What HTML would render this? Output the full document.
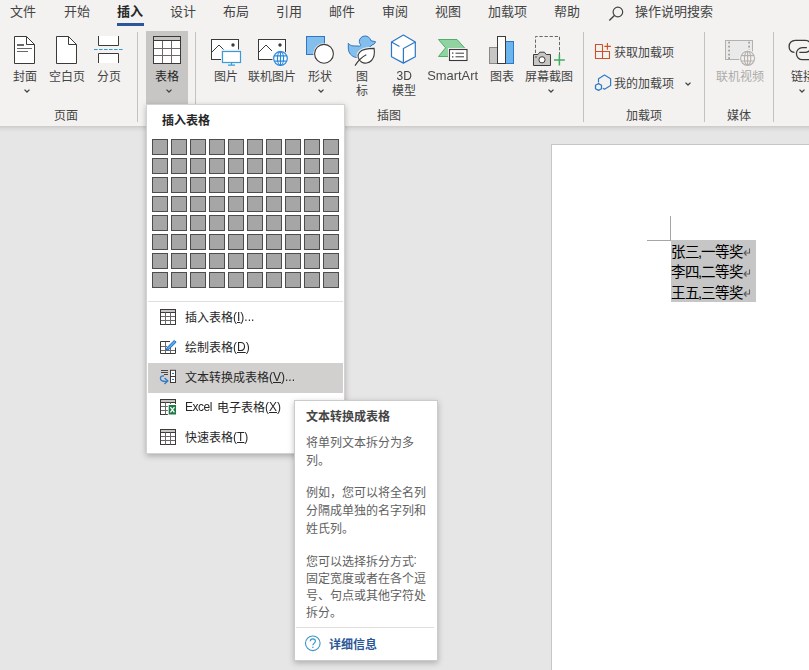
<!DOCTYPE html>
<html lang="zh-CN"><head><meta charset="utf-8"><title>Word - 文本转换成表格</title>
<style>
html,body{margin:0;padding:0}
body{width:809px;height:670px;overflow:hidden;position:relative;background:#e6e6e6;font-family:"Liberation Sans","Noto Sans CJK SC",sans-serif;color:#444}
div,span,svg{box-sizing:border-box}
.l{position:absolute;white-space:nowrap;line-height:0}
.l svg{display:block}
.ml{display:flex;align-items:flex-start}
.ml svg{flex:none}
.lt{transform:translateZ(0)}
.ml span{display:block;position:relative;top:-0.1px;transform:translateZ(0)}
svg.t{fill:currentColor;stroke:none;overflow:visible}
svg.t text{font-family:"Liberation Sans","Noto Sans CJK SC",sans-serif;font-size:1000px}
svg.t.b text{font-weight:bold}
.ic{position:absolute;overflow:visible}
#ribbon{position:absolute;left:0;top:0;width:809px;height:126px;background:#f3f2f1}
#rshadow{position:absolute;left:0;top:126px;width:809px;height:6px;background:linear-gradient(#cdcbc9,#dcdcdc 50%,#e6e6e6)}
.sep{position:absolute;width:1px;background:#c4c2c0;top:32px;height:90px}
.tab{color:#444}
#tab-ins{color:#262626}
#tabline{position:absolute;left:117px;top:23px;width:27px;height:3px;background:#2b579a}
#btn-table{position:absolute;left:146px;top:31px;width:42px;height:74px;background:#c8c6c4}
.gl{color:#444}
.dis{color:#adabaa}
#doc{position:absolute;left:0;top:126px;width:809px;height:544px}
#page{position:absolute;left:551px;top:144px;width:300px;height:600px;background:#fff;border:1px solid #c6c6c6}
#sel{position:absolute;left:671px;top:240px;width:85px;height:61.500px;background:#c6c6c6}
.doctext{color:#000}
#crop-v{position:absolute;left:670px;top:216px;width:1px;height:24px;background:#a6a6a6}
#crop-h{position:absolute;left:647px;top:240px;width:24px;height:1px;background:#a6a6a6}
#menu{position:absolute;left:146px;top:104px;width:199px;height:350px;background:#fff;border:1px solid #d2d2d2;box-shadow:0 2px 6px rgba(0,0,0,.26)}
#menu .cell{position:absolute;width:16px;height:16px;background:#a6a6a6;border:1px solid #4d4d4d}
#msep{position:absolute;left:1px;top:196px;width:195px;height:1px;background:#e1dfdd}
#mhl{position:absolute;left:1px;top:258px;width:195px;height:30px;background:#d2d0ce}
.mi{color:#262626}
#tip{position:absolute;left:294px;top:400px;width:144px;height:261px;background:#fff;border:1px solid #cbcbcb;box-shadow:0 2px 6px rgba(0,0,0,.25)}
#tipsep{position:absolute;left:1px;top:226px;width:138px;height:1px;background:#e1dfdd}
.tt{color:#444}
.tb{color:#616161}
.tl{color:#2b579a}
</style></head>
<body>
<div id="doc"></div>
<div id="page"></div>
<div id="crop-v"></div><div id="crop-h"></div>
<div id="sel"></div>
<div class="l doctext" style="left:670.6px;top:243.5px;"><svg class="t" width="27.98" height="14.5" viewBox="0 -880 1930 1000"><text x="0" y="0" font-size="1000" letter-spacing="-35">张三</text></svg></div>
<div class="l doctext" style="left:698.2px;top:243.5px;"><svg class="t" width="4.03" height="14.5" viewBox="0 -880 278 1000"><text x="0" y="0" font-size="1000">,</text></svg></div>
<div class="l doctext" style="left:701.1px;top:243.5px;"><svg class="t" width="41.98" height="14.5" viewBox="0 -880 2895 1000"><text x="0" y="0" font-size="1000" letter-spacing="-35">一等奖</text></svg></div>
<svg class="ic" style="left:743.4px;top:248px" width="8" height="9" viewBox="0 0 8 9"><path d="M6.500 .5v4.500H1M3.500 2.500 1 5l2.500 2.500" fill="none" stroke="#5f5f5f" stroke-width="1.100"/></svg>
<div class="l doctext" style="left:670.6px;top:264.1px;"><svg class="t" width="27.98" height="14.5" viewBox="0 -880 1930 1000"><text x="0" y="0" font-size="1000" letter-spacing="-35">李四</text></svg></div>
<div class="l doctext" style="left:698.2px;top:264.1px;"><svg class="t" width="4.03" height="14.5" viewBox="0 -880 278 1000"><text x="0" y="0" font-size="1000">,</text></svg></div>
<div class="l doctext" style="left:701.1px;top:264.1px;"><svg class="t" width="41.98" height="14.5" viewBox="0 -880 2895 1000"><text x="0" y="0" font-size="1000" letter-spacing="-35">二等奖</text></svg></div>
<svg class="ic" style="left:743.4px;top:268.6px" width="8" height="9" viewBox="0 0 8 9"><path d="M6.500 .5v4.500H1M3.500 2.500 1 5l2.500 2.500" fill="none" stroke="#5f5f5f" stroke-width="1.100"/></svg>
<div class="l doctext" style="left:670.6px;top:284.7px;"><svg class="t" width="27.98" height="14.5" viewBox="0 -880 1930 1000"><text x="0" y="0" font-size="1000" letter-spacing="-35">王五</text></svg></div>
<div class="l doctext" style="left:698.2px;top:284.7px;"><svg class="t" width="4.03" height="14.5" viewBox="0 -880 278 1000"><text x="0" y="0" font-size="1000">,</text></svg></div>
<div class="l doctext" style="left:701.1px;top:284.7px;"><svg class="t" width="41.98" height="14.5" viewBox="0 -880 2895 1000"><text x="0" y="0" font-size="1000" letter-spacing="-35">三等奖</text></svg></div>
<svg class="ic" style="left:743.4px;top:289.2px" width="8" height="9" viewBox="0 0 8 9"><path d="M6.500 .5v4.500H1M3.500 2.500 1 5l2.500 2.500" fill="none" stroke="#5f5f5f" stroke-width="1.100"/></svg>
<div id="ribbon">
<div class="l tab" style="left:10px;top:5px;"><svg class="t" width="26" height="13" viewBox="0 -880 2000 1000"><text x="0" y="0" font-size="1000">文件</text></svg></div>
<div class="l tab" style="left:64px;top:5px;"><svg class="t" width="26" height="13" viewBox="0 -880 2000 1000"><text x="0" y="0" font-size="1000">开始</text></svg></div>
<div class="l tab" style="left:117px;top:5px;color:#262626"><svg class="t b" width="26" height="13" viewBox="0 -880 2000 1000"><text x="0" y="0" font-size="1000">插入</text></svg></div>
<div class="l tab" style="left:170px;top:5px;"><svg class="t" width="26" height="13" viewBox="0 -880 2000 1000"><text x="0" y="0" font-size="1000">设计</text></svg></div>
<div class="l tab" style="left:223px;top:5px;"><svg class="t" width="26" height="13" viewBox="0 -880 2000 1000"><text x="0" y="0" font-size="1000">布局</text></svg></div>
<div class="l tab" style="left:276px;top:5px;"><svg class="t" width="26" height="13" viewBox="0 -880 2000 1000"><text x="0" y="0" font-size="1000">引用</text></svg></div>
<div class="l tab" style="left:329px;top:5px;"><svg class="t" width="26" height="13" viewBox="0 -880 2000 1000"><text x="0" y="0" font-size="1000">邮件</text></svg></div>
<div class="l tab" style="left:382px;top:5px;"><svg class="t" width="26" height="13" viewBox="0 -880 2000 1000"><text x="0" y="0" font-size="1000">审阅</text></svg></div>
<div class="l tab" style="left:435px;top:5px;"><svg class="t" width="26" height="13" viewBox="0 -880 2000 1000"><text x="0" y="0" font-size="1000">视图</text></svg></div>
<div class="l tab" style="left:488px;top:5px;"><svg class="t" width="39" height="13" viewBox="0 -880 3000 1000"><text x="0" y="0" font-size="1000">加载项</text></svg></div>
<div class="l tab" style="left:554px;top:5px;"><svg class="t" width="26" height="13" viewBox="0 -880 2000 1000"><text x="0" y="0" font-size="1000">帮助</text></svg></div>
<div id="tabline"></div>
<svg class="ic" style="left:608px;top:6px" width="18" height="18" viewBox="608 6 18 18"><circle cx="617.900" cy="12" r="4.800" fill="none" stroke="#444" stroke-width="1.200"/><path d="M614.400 15.500 609.300 20.600" stroke="#444" stroke-width="1.400"/></svg>
<div class="l tab" style="left:635px;top:5px;"><svg class="t" width="78" height="13" viewBox="0 -880 6000 1000"><text x="0" y="0" font-size="1000">操作说明搜索</text></svg></div>
<div class="sep" style="left:137px"></div>
<div class="sep" style="left:195px"></div>
<div class="sep" style="left:583px"></div>
<div class="sep" style="left:704px"></div>
<div class="sep" style="left:773px"></div>
<div id="btn-table"></div>
<svg class="ic" style="left:13px;top:35px" width="24" height="30" viewBox="13 35 24 30"><path d="M14.5 36.5h12l8 8v19h-20z" fill="#fff" stroke="#3b3a39"/><path d="M26.5 36.5v8h8" fill="none" stroke="#3b3a39"/><path d="M17 45h7" stroke="#6b6967" stroke-width="2"/><path d="M17 48.5h15M17 51.5h11" stroke="#6b6967" stroke-width="1"/></svg>
<div class="l" style="left:13px;top:69.5px;"><svg class="t" width="24" height="12" viewBox="0 -880 2000 1000"><text x="0" y="0" font-size="1000">封面</text></svg></div>
<svg class="ic" style="left:23.7px;top:88.5px" width="6" height="4" viewBox="0 0 6 4"><path d="M.5.6 3 3 5.500.6" fill="none" stroke="#444" stroke-width="1.300"/></svg>
<svg class="ic" style="left:55px;top:35px" width="24" height="30" viewBox="55 35 24 30"><path d="M56.5 36.5h12l8 8v19h-20z" fill="#fff" stroke="#3b3a39"/><path d="M68.5 36.5v8h8" fill="none" stroke="#3b3a39"/></svg>
<div class="l" style="left:49px;top:69.5px;"><svg class="t" width="36" height="12" viewBox="0 -880 3000 1000"><text x="0" y="0" font-size="1000">空白页</text></svg></div>
<svg class="ic" style="left:92px;top:35px" width="34" height="30" viewBox="92 35 34 30"><path d="M98.5 36v9.500h20V36" fill="#fff" stroke="#3b3a39"/><path d="M98.5 63v-9.500h20V63" fill="#fff" stroke="#3b3a39"/><path d="M94 49.5h29" stroke="#2e9ad6" stroke-width="1.2" stroke-dasharray="3.600 1.400"/></svg>
<div class="l" style="left:97px;top:69.5px;"><svg class="t" width="24" height="12" viewBox="0 -880 2000 1000"><text x="0" y="0" font-size="1000">分页</text></svg></div>
<svg class="ic" style="left:152px;top:35px" width="31" height="30" viewBox="152 35 31 30"><rect x="153.500" y="36.500" width="27" height="27" fill="#fff" stroke="#3b3a39"/><rect x="154" y="37" width="26" height="3" fill="#c8c6c4"/><path d="M154 40.500h26" stroke="#3b3a39"/><path d="M162.500 41v22M171.500 41v22M154 48.500h26M154 55.500h26" stroke="#6b6967" stroke-width="1"/></svg>
<div class="l" style="left:155px;top:69.5px;color:#262626"><svg class="t" width="24" height="12" viewBox="0 -880 2000 1000"><text x="0" y="0" font-size="1000">表格</text></svg></div>
<svg class="ic" style="left:165.5px;top:88.6px" width="6" height="4" viewBox="0 0 6 4"><path d="M.5.6 3 3 5.500.6" fill="none" stroke="#444" stroke-width="1.300"/></svg>
<svg class="ic" style="left:209px;top:37px" width="34" height="31" viewBox="209 37 34 31"><rect x="211.500" y="39.500" width="27" height="20" fill="#fff" stroke="#3b3a39"/><path d="M211.500 52.500l7.500-7.500 6 6" fill="none" stroke="#3b3a39"/><circle cx="233" cy="45" r="1.700" fill="#3b3a39"/><rect x="221" y="49.500" width="21" height="14.500" fill="#f3f2f1"/><rect x="222.500" y="51.500" width="18" height="11" fill="#fff" stroke="#3a9bd9" stroke-width="1.200"/><path d="M231.500 62.500v2.700M228 65.200h7" stroke="#3a9bd9" stroke-width="1.200" fill="none"/></svg>
<div class="l" style="left:213.5px;top:69.5px;"><svg class="t" width="24" height="12" viewBox="0 -880 2000 1000"><text x="0" y="0" font-size="1000">图片</text></svg></div>
<svg class="ic" style="left:256px;top:37px" width="34" height="31" viewBox="256 37 34 31"><rect x="258.500" y="39.500" width="27" height="20" fill="#fff" stroke="#3b3a39"/><path d="M258.500 52.500l7.500-7.500 6 6" fill="none" stroke="#3b3a39"/><circle cx="280" cy="45" r="1.700" fill="#3b3a39"/><circle cx="280.500" cy="58.500" r="8.300" fill="#f3f2f1"/><circle cx="280.500" cy="58.500" r="6.800" fill="#fff" stroke="#2b88d8" stroke-width="1.200"/><ellipse cx="280.500" cy="58.500" rx="3.060" ry="6.800" fill="none" stroke="#2b88d8" stroke-width="1.200"/><path d="M280.500 51.700v13.600 M274.240 55.920h12.510 M274.240 61.080h12.510" stroke="#2b88d8" stroke-width="1.200" fill="none"/></svg>
<div class="l" style="left:248px;top:69.5px;"><svg class="t" width="48" height="12" viewBox="0 -880 4000 1000"><text x="0" y="0" font-size="1000">联机图片</text></svg></div>
<svg class="ic" style="left:304px;top:34px" width="33" height="32" viewBox="304 34 33 32"><rect x="306.500" y="36.500" width="18" height="18" fill="#83beec" stroke="#2c78c6"/><circle cx="324" cy="53.800" r="10.600" fill="#f3f2f1"/><circle cx="324" cy="53.800" r="9.400" fill="#fff" stroke="#3b3a39" stroke-width="1.100"/></svg>
<div class="l" style="left:308px;top:69.5px;"><svg class="t" width="24" height="12" viewBox="0 -880 2000 1000"><text x="0" y="0" font-size="1000">形状</text></svg></div>
<svg class="ic" style="left:318.4px;top:88.5px" width="6" height="4" viewBox="0 0 6 4"><path d="M.5.6 3 3 5.500.6" fill="none" stroke="#444" stroke-width="1.300"/></svg>
<svg class="ic" style="left:346px;top:33px" width="32" height="35" viewBox="346 33 32 35"><path d="M348.300 43.300C349.500 44.800 351 45.700 353 45.900L359.500 46.100C360.500 46.100 361 45.500 360.600 44.700C359.600 43.500 359.300 42.500 359.300 41.500C359.300 38.400 361.900 36 365.100 36C367.900 36 370.300 37.900 370.800 40.700L375.500 41.700C375 43.600 373.800 44.600 372 44.900C371.500 45.800 370.600 46.600 369.300 47.200C371.500 48 373 49.500 373.500 51.500L373.500 57.500L356 57.500C351.500 56.500 348.300 53 348.300 48Z" fill="#83beec" stroke="#2c78c6" stroke-width="1"/><path d="M374.100 48.400C374.800 53 374.300 57.500 371.500 60.500C369 63.300 364.500 64 361.500 62C358 59.700 356.800 55.500 359.500 52.300C362.500 49 368 48.400 374.100 48.400Z" fill="#f3f2f1" stroke="#f3f2f1" stroke-width="3.200"/><path d="M374.100 48.400C374.800 53 374.300 57.500 371.500 60.500C369 63.300 364.500 64 361.500 62C358 59.700 356.800 55.500 359.500 52.300C362.500 49 368 48.400 374.100 48.400Z" fill="#fff" stroke="#3b3a39" stroke-width="1.100"/><path d="M355 65.600C358 61 362 57 366.300 54.800" fill="none" stroke="#3b3a39" stroke-width="1.100"/></svg>
<div class="l" style="left:356px;top:69.5px;"><svg class="t" width="12" height="12" viewBox="0 -880 1000 1000"><text x="0" y="0" font-size="1000">图</text></svg></div>
<div class="l" style="left:356px;top:84px;"><svg class="t" width="12" height="12" viewBox="0 -880 1000 1000"><text x="0" y="0" font-size="1000">标</text></svg></div>
<svg class="ic" style="left:389px;top:33px" width="29" height="33" viewBox="389 33 29 33"><path d="M403.400 35l11.900 7v14.700l-11.900 6.400-11.900-6.400V42z" fill="#fff" stroke="#2c78c6" stroke-width="1.200" stroke-linejoin="round"/><path d="M415.300 42l-11.900 6.500v14.500M391.500 42l8 4.500" fill="none" stroke="#2c78c6" stroke-width="1.200"/></svg>
<div class="l lt" style="left:396.5px;top:70px;font-size:12px;line-height:12px">3D</div>
<div class="l" style="left:392px;top:84px;"><svg class="t" width="24" height="12" viewBox="0 -880 2000 1000"><text x="0" y="0" font-size="1000">模型</text></svg></div>
<svg class="ic" style="left:436px;top:37px" width="34" height="26" viewBox="436 37 34 26"><path d="M438.500 39.500h18.500l7.500 8.300-7.500 8.700h-18.500l7.100-8.700z" fill="#90d3a0" stroke="#4caf6a" stroke-width="1"/><rect x="448" y="48" width="20.200" height="13.800" fill="#f3f2f1"/><rect x="449.500" y="49.500" width="17.500" height="11" fill="#fff" stroke="#3b3a39" stroke-width="1.100"/><path d="M455.500 53.200h8.500M455.500 56.800h8.500" stroke="#3b3a39" stroke-width="1"/><path d="M452 53.200h1.400M452 56.800h1.400" stroke="#3b3a39" stroke-width="1.300"/></svg>
<div class="l lt" style="left:427.2px;top:70px;font-size:12.900px;line-height:12px;color:#4a4a4a">SmartArt</div>
<svg class="ic" style="left:487px;top:34px" width="30" height="32" viewBox="487 34 30 32"><rect x="489.500" y="47.500" width="8" height="16" fill="#c8c6c4" stroke="#8a8886"/><rect x="505.500" y="41.500" width="8" height="22" fill="#6cb4ee" stroke="#2c78c6"/><rect x="497.500" y="36.500" width="8" height="27" fill="#fff" stroke="#3b3a39"/></svg>
<div class="l" style="left:490px;top:69.5px;"><svg class="t" width="24" height="12" viewBox="0 -880 2000 1000"><text x="0" y="0" font-size="1000">图表</text></svg></div>
<svg class="ic" style="left:531px;top:34px" width="37" height="34" viewBox="531 34 37 34"><path d="M535.500 53v-16.500h24V57" fill="none" stroke="#6a6866" stroke-width="1" stroke-dasharray="3.300 1.800"/><path d="M533.500 54.500h4.500l1.800-2.300h4.600l1.800 2.300h4.300v11h-17z" fill="#c8c6c4" stroke="#3b3a39" stroke-width="1"/><circle cx="542" cy="59.800" r="3.100" fill="#fff" stroke="#3b3a39" stroke-width="1"/><circle cx="536" cy="57" r=".8" fill="#3b3a39"/><path d="M554 59.900h10.800M559.400 54.600v11" stroke="#3fae5e" stroke-width="1.500" fill="none"/></svg>
<div class="l" style="left:525px;top:69.5px;"><svg class="t" width="48" height="12" viewBox="0 -880 4000 1000"><text x="0" y="0" font-size="1000">屏幕截图</text></svg></div>
<svg class="ic" style="left:547.5px;top:88.5px" width="6" height="4" viewBox="0 0 6 4"><path d="M.5.6 3 3 5.500.6" fill="none" stroke="#444" stroke-width="1.300"/></svg>
<svg class="ic" style="left:594px;top:42px" width="18" height="18" viewBox="594 42 18 18"><path d="M602.500 44.500h-7v14h14v-7h-14M602.500 44.500v14" fill="none" stroke="#cb5127" stroke-width="1.100"/><path d="M604.300 46.400h6.600M607.400 43.100v6.600" fill="none" stroke="#cb5127" stroke-width="1.100"/></svg>
<div class="l" style="left:614px;top:45.6px;"><svg class="t" width="60" height="12" viewBox="0 -880 5000 1000"><text x="0" y="0" font-size="1000">获取加载项</text></svg></div>
<svg class="ic" style="left:593px;top:73px" width="20" height="20" viewBox="593 73 20 20"><path d="M598.500 82V78.700L604.500 75.100L610.600 78.700V85.600L604.500 89.200L603.300 88.500" fill="none" stroke="#2f7bc4" stroke-width="1.200" stroke-linejoin="round" stroke-linecap="round"/><path d="M598.500 83.600L601.500 85.300V88.700L598.500 90.400L595.500 88.700V85.300Z" fill="none" stroke="#2f7bc4" stroke-width="1.300" stroke-linejoin="round"/></svg>
<div class="l" style="left:614px;top:77px;"><svg class="t" width="60" height="12" viewBox="0 -880 5000 1000"><text x="0" y="0" font-size="1000">我的加载项</text></svg></div>
<svg class="ic" style="left:684.5px;top:82px" width="6" height="4" viewBox="0 0 6 4"><path d="M.5.6 3 3 5.500.6" fill="none" stroke="#444" stroke-width="1.300"/></svg>
<svg class="ic" style="left:723px;top:38px" width="35" height="30" viewBox="723 38 35 30"><rect x="725.500" y="40.500" width="27" height="19" fill="#eaeaea" stroke="#b3b0ad"/><rect x="728.200" y="41.700" width="1.800" height="1.800" fill="#a3a1a0"/><rect x="748.200" y="41.700" width="1.800" height="1.800" fill="#a3a1a0"/><rect x="728.200" y="45.700" width="1.800" height="1.800" fill="#a3a1a0"/><rect x="748.200" y="45.700" width="1.800" height="1.800" fill="#a3a1a0"/><rect x="728.200" y="49.700" width="1.800" height="1.800" fill="#a3a1a0"/><rect x="748.200" y="49.700" width="1.800" height="1.800" fill="#a3a1a0"/><rect x="728.200" y="53.700" width="1.800" height="1.800" fill="#a3a1a0"/><rect x="748.200" y="53.700" width="1.800" height="1.800" fill="#a3a1a0"/><rect x="728.200" y="57.200" width="1.800" height="1.800" fill="#a3a1a0"/><rect x="748.200" y="57.200" width="1.800" height="1.800" fill="#a3a1a0"/><circle cx="747.600" cy="58.300" r="8.500" fill="#f3f2f1"/><circle cx="747.600" cy="58.300" r="7" fill="#f3f2f1" stroke="#b3b0ad" stroke-width="1.100"/><ellipse cx="747.600" cy="58.300" rx="3.150" ry="7" fill="none" stroke="#b3b0ad" stroke-width="1.100"/><path d="M747.600 51.300v14 M741.160 55.640h12.880 M741.160 60.960h12.880" stroke="#b3b0ad" stroke-width="1.100" fill="none"/></svg>
<div class="l dis" style="left:715.5px;top:69.5px;"><svg class="t" width="48" height="12" viewBox="0 -880 4000 1000"><text x="0" y="0" font-size="1000">联机视频</text></svg></div>
<svg class="ic" style="left:787px;top:38px" width="22" height="24" viewBox="787 38 22 24"><path d="M794.500 52.400C791.300 52 789.100 49.600 789.100 46.400C789.100 43 791.800 40.300 795.200 40.300L805.300 40.300C808.700 40.300 811.400 43 811.400 46.400C811.400 49.800 808.700 52.400 805.300 52.400L799.300 52.400" fill="none" stroke="#3b3a39" stroke-width="1.300"/><path d="M806.900 47.600L802.400 47.600C799.100 47.600 796.400 50.300 796.400 53.600C796.400 57 799.100 59.700 802.400 59.700L812 59.700" fill="none" stroke="#3b3a39" stroke-width="1.300"/></svg>
<div class="l" style="left:791px;top:69.5px;"><svg class="t" width="24" height="12" viewBox="0 -880 2000 1000"><text x="0" y="0" font-size="1000">链接</text></svg></div>
<svg class="ic" style="left:799px;top:88.5px" width="6" height="4" viewBox="0 0 6 4"><path d="M.5.6 3 3 5.500.6" fill="none" stroke="#444" stroke-width="1.300"/></svg>
<div class="l gl" style="left:54px;top:108.9px;"><svg class="t" width="24" height="12" viewBox="0 -880 2000 1000"><text x="0" y="0" font-size="1000">页面</text></svg></div>
<div class="l gl" style="left:377px;top:108.9px;"><svg class="t" width="24" height="12" viewBox="0 -880 2000 1000"><text x="0" y="0" font-size="1000">插图</text></svg></div>
<div class="l gl" style="left:626px;top:108.9px;"><svg class="t" width="36" height="12" viewBox="0 -880 3000 1000"><text x="0" y="0" font-size="1000">加载项</text></svg></div>
<div class="l gl" style="left:726.5px;top:108.9px;"><svg class="t" width="24" height="12" viewBox="0 -880 2000 1000"><text x="0" y="0" font-size="1000">媒体</text></svg></div>
</div>
<div id="rshadow"></div>
<div id="menu">
<div class="l" style="left:15px;top:9px;color:#262626"><svg class="t b" width="48" height="12" viewBox="0 -880 4000 1000"><text x="0" y="0" font-size="1000">插入表格</text></svg></div>
<div class="cell" style="left:5px;top:34px"></div>
<div class="cell" style="left:24px;top:34px"></div>
<div class="cell" style="left:43px;top:34px"></div>
<div class="cell" style="left:62px;top:34px"></div>
<div class="cell" style="left:81px;top:34px"></div>
<div class="cell" style="left:100px;top:34px"></div>
<div class="cell" style="left:119px;top:34px"></div>
<div class="cell" style="left:138px;top:34px"></div>
<div class="cell" style="left:157px;top:34px"></div>
<div class="cell" style="left:176px;top:34px"></div>
<div class="cell" style="left:5px;top:53px"></div>
<div class="cell" style="left:24px;top:53px"></div>
<div class="cell" style="left:43px;top:53px"></div>
<div class="cell" style="left:62px;top:53px"></div>
<div class="cell" style="left:81px;top:53px"></div>
<div class="cell" style="left:100px;top:53px"></div>
<div class="cell" style="left:119px;top:53px"></div>
<div class="cell" style="left:138px;top:53px"></div>
<div class="cell" style="left:157px;top:53px"></div>
<div class="cell" style="left:176px;top:53px"></div>
<div class="cell" style="left:5px;top:72px"></div>
<div class="cell" style="left:24px;top:72px"></div>
<div class="cell" style="left:43px;top:72px"></div>
<div class="cell" style="left:62px;top:72px"></div>
<div class="cell" style="left:81px;top:72px"></div>
<div class="cell" style="left:100px;top:72px"></div>
<div class="cell" style="left:119px;top:72px"></div>
<div class="cell" style="left:138px;top:72px"></div>
<div class="cell" style="left:157px;top:72px"></div>
<div class="cell" style="left:176px;top:72px"></div>
<div class="cell" style="left:5px;top:91px"></div>
<div class="cell" style="left:24px;top:91px"></div>
<div class="cell" style="left:43px;top:91px"></div>
<div class="cell" style="left:62px;top:91px"></div>
<div class="cell" style="left:81px;top:91px"></div>
<div class="cell" style="left:100px;top:91px"></div>
<div class="cell" style="left:119px;top:91px"></div>
<div class="cell" style="left:138px;top:91px"></div>
<div class="cell" style="left:157px;top:91px"></div>
<div class="cell" style="left:176px;top:91px"></div>
<div class="cell" style="left:5px;top:110px"></div>
<div class="cell" style="left:24px;top:110px"></div>
<div class="cell" style="left:43px;top:110px"></div>
<div class="cell" style="left:62px;top:110px"></div>
<div class="cell" style="left:81px;top:110px"></div>
<div class="cell" style="left:100px;top:110px"></div>
<div class="cell" style="left:119px;top:110px"></div>
<div class="cell" style="left:138px;top:110px"></div>
<div class="cell" style="left:157px;top:110px"></div>
<div class="cell" style="left:176px;top:110px"></div>
<div class="cell" style="left:5px;top:129px"></div>
<div class="cell" style="left:24px;top:129px"></div>
<div class="cell" style="left:43px;top:129px"></div>
<div class="cell" style="left:62px;top:129px"></div>
<div class="cell" style="left:81px;top:129px"></div>
<div class="cell" style="left:100px;top:129px"></div>
<div class="cell" style="left:119px;top:129px"></div>
<div class="cell" style="left:138px;top:129px"></div>
<div class="cell" style="left:157px;top:129px"></div>
<div class="cell" style="left:176px;top:129px"></div>
<div class="cell" style="left:5px;top:148px"></div>
<div class="cell" style="left:24px;top:148px"></div>
<div class="cell" style="left:43px;top:148px"></div>
<div class="cell" style="left:62px;top:148px"></div>
<div class="cell" style="left:81px;top:148px"></div>
<div class="cell" style="left:100px;top:148px"></div>
<div class="cell" style="left:119px;top:148px"></div>
<div class="cell" style="left:138px;top:148px"></div>
<div class="cell" style="left:157px;top:148px"></div>
<div class="cell" style="left:176px;top:148px"></div>
<div class="cell" style="left:5px;top:167px"></div>
<div class="cell" style="left:24px;top:167px"></div>
<div class="cell" style="left:43px;top:167px"></div>
<div class="cell" style="left:62px;top:167px"></div>
<div class="cell" style="left:81px;top:167px"></div>
<div class="cell" style="left:100px;top:167px"></div>
<div class="cell" style="left:119px;top:167px"></div>
<div class="cell" style="left:138px;top:167px"></div>
<div class="cell" style="left:157px;top:167px"></div>
<div class="cell" style="left:176px;top:167px"></div>
<div id="msep"></div>
<div id="mhl"></div>
<svg class="ic" style="left:12px;top:203px" width="18" height="18" viewBox="159 308 18 18"><rect x="160.500" y="309.500" width="15" height="15" fill="#fff" stroke="#3b3a39"/><rect x="161" y="310" width="14" height="2" fill="#c8c6c4"/><path d="M161 312.500h14" stroke="#3b3a39"/><path d="M165.500 312.500v12M170.500 312.500v12M161 316.500h14M161 320.500h14" stroke="#6b6967" fill="none"/></svg>
<div class="l ml mi" style="left:38px;top:206px;font-size:12px;line-height:12px;height:12px;"><svg class="t" width="48" height="12" viewBox="0 -880 4000 1000"><text x="0" y="0" font-size="1000">插入表格</text></svg><span>(<u>I</u>)...</span></div>
<svg class="ic" style="left:12px;top:233px" width="19" height="17" viewBox="159 338 19 17"><path d="M170 341.500h-9.500v12h15v-6" fill="#fff" stroke="#3b3a39"/><path d="M165.500 342v11M170.500 348v5M161 346.500h6M161 350.500h14" stroke="#6b6967" fill="none"/><path d="M174.300 340.400l1.800 1.800-7.300 7.200-2.500.8.700-2.600z" fill="#5aa6ea" stroke="#1f6dbd" stroke-width="1" stroke-linejoin="round"/></svg>
<div class="l ml mi" style="left:38px;top:236px;font-size:12px;line-height:12px;height:12px;"><svg class="t" width="48" height="12" viewBox="0 -880 4000 1000"><text x="0" y="0" font-size="1000">绘制表格</text></svg><span>(<u>D</u>)</span></div>
<svg class="ic" style="left:12px;top:263px" width="19" height="18" viewBox="159 368 19 18"><path d="M161 370.500h7M161 372.500h7M164 374.500h4" stroke="#3b3a39" stroke-width=".900" fill="none"/><rect x="170.500" y="370.300" width="5" height="12.200" fill="#fff" stroke="#3b3a39"/><path d="M171 376.500h4" stroke="#3b3a39"/><path d="M172 373.500h2M172 379.500h2" stroke="#2c78c6" stroke-width="1.200"/><path d="M164 376c-2.200-.5-3.600.6-3.600 2.400 0 2.300 2.400 3.200 6.400 2.800" fill="none" stroke="#2c78c6" stroke-width="1.300"/><path d="M164.600 378l3.200 3.100-3.400 3" fill="none" stroke="#2c78c6" stroke-width="1.300"/></svg>
<div class="l ml mi" style="left:38px;top:266px;font-size:12px;line-height:12px;height:12px;"><svg class="t" width="84" height="12" viewBox="0 -880 7000 1000"><text x="0" y="0" font-size="1000">文本转换成表格</text></svg><span>(<u>V</u>)...</span></div>
<svg class="ic" style="left:12px;top:293px" width="19" height="18" viewBox="159 398 19 18"><rect x="160.500" y="399.500" width="15" height="15" fill="#fff" stroke="#3b3a39"/><rect x="161" y="400" width="14" height="2" fill="#c8c6c4"/><path d="M161 402.500h14" stroke="#3b3a39"/><path d="M165.500 402.500v12M170.500 402.500v12M161 406.500h14M161 410.500h14" stroke="#6b6967" fill="none"/><rect x="167.800" y="404" width="9" height="11.500" fill="#fff"/><rect x="168.700" y="405" width="7.300" height="9.500" fill="#1e7a45"/><path d="M170.400 407.200l4 5.200M174.400 407.200l-4 5.200" stroke="#fff" stroke-width="1.300"/></svg>
<div class="l ml mi" style="left:38px;top:296px;font-size:12px;line-height:12px;height:12px;"><span><b style="display:inline-block;width:32px;font-weight:normal;letter-spacing:-.5px">Excel</b></span><svg class="t" width="48" height="12" viewBox="0 -880 4000 1000"><text x="0" y="0" font-size="1000">电子表格</text></svg><span>(<u>X</u>)</span></div>
<svg class="ic" style="left:12px;top:323px" width="18" height="18" viewBox="159 428 18 18"><rect x="160.500" y="429.500" width="15" height="15" fill="#fff" stroke="#3b3a39"/><rect x="161" y="430" width="14" height="2" fill="#c8c6c4"/><path d="M161 432.500h14" stroke="#3b3a39"/><path d="M165.500 432.500v12M170.500 432.500v12M161 436.500h14M161 440.500h14" stroke="#6b6967" fill="none"/></svg>
<div class="l ml mi" style="left:38px;top:326px;font-size:12px;line-height:12px;height:12px;"><svg class="t" width="48" height="12" viewBox="0 -880 4000 1000"><text x="0" y="0" font-size="1000">快速表格</text></svg><span>(<u>T</u>)</span></div>
</div>
<div id="tip">
<div class="l tt" style="left:10.6px;top:8.5px;"><svg class="t b" width="84" height="12" viewBox="0 -880 7000 1000"><text x="0" y="0" font-size="1000">文本转换成表格</text></svg></div>
<div class="l tb" style="left:10.6px;top:35.2px;"><svg class="t" width="108" height="12" viewBox="0 -880 9000 1000"><text x="0" y="0" font-size="1000">将单列文本拆分为多</text></svg></div>
<div class="l tb" style="left:10.6px;top:52.9px;"><svg class="t" width="24" height="12" viewBox="0 -880 2000 1000"><text x="0" y="0" font-size="1000">列。</text></svg></div>
<div class="l tb" style="left:10.6px;top:85.4px;"><svg class="t" width="120" height="12" viewBox="0 -880 10000 1000"><text x="0" y="0" font-size="1000">例如，您可以将全名列</text></svg></div>
<div class="l tb" style="left:10.6px;top:103px;"><svg class="t" width="120" height="12" viewBox="0 -880 10000 1000"><text x="0" y="0" font-size="1000">分隔成单独的名字列和</text></svg></div>
<div class="l tb" style="left:10.6px;top:120.7px;"><svg class="t" width="48" height="12" viewBox="0 -880 4000 1000"><text x="0" y="0" font-size="1000">姓氏列。</text></svg></div>
<div class="l ml tb" style="left:10.6px;top:153.5px;font-size:12px;line-height:12px;height:12px;"><svg class="t" width="108" height="12" viewBox="0 -880 9000 1000"><text x="0" y="0" font-size="1000">您可以选择拆分方式</text></svg><span>:</span></div>
<div class="l tb" style="left:10.6px;top:170.6px;"><svg class="t" width="120" height="12" viewBox="0 -880 10000 1000"><text x="0" y="0" font-size="1000">固定宽度或者在各个逗</text></svg></div>
<div class="l tb" style="left:10.6px;top:187.7px;"><svg class="t" width="120" height="12" viewBox="0 -880 10000 1000"><text x="0" y="0" font-size="1000">号、句点或其他字符处</text></svg></div>
<div class="l tb" style="left:10.6px;top:204.9px;"><svg class="t" width="36" height="12" viewBox="0 -880 3000 1000"><text x="0" y="0" font-size="1000">拆分。</text></svg></div>
<div id="tipsep"></div>
<svg class="ic" style="left:9px;top:233px" width="18" height="18" viewBox="304 634 18 18"><circle cx="312.800" cy="643.300" r="7.300" fill="#fff" stroke="#3a96c8" stroke-width="1.100"/><path d="M310.300 641.300c0-1.500 1.100-2.500 2.600-2.500 1.500 0 2.500 1 2.500 2.300 0 2-2.500 2-2.500 4.200" fill="none" stroke="#3a96c8" stroke-width="1.200"/><circle cx="312.900" cy="647.300" r=".8" fill="#3a96c8"/></svg>
<div class="l tl" style="left:34px;top:237.3px;"><svg class="t b" width="48" height="12" viewBox="0 -880 4000 1000"><text x="0" y="0" font-size="1000">详细信息</text></svg></div>
</div>
</body></html>
